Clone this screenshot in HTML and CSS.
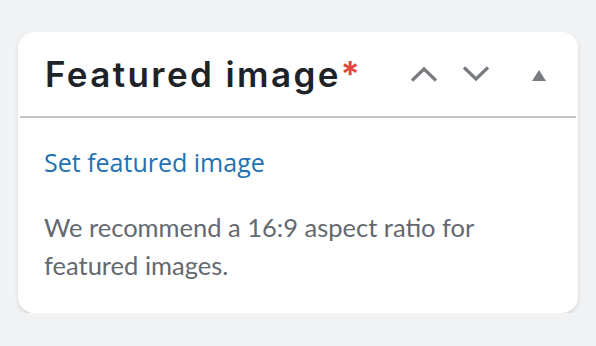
FILE: index.html
```html
<!DOCTYPE html>
<html lang="en">
<head>
<meta charset="UTF-8" />
<meta name="viewport" content="width=device-width, initial-scale=1" />
<title>Featured image</title>
<link rel="stylesheet" href="styles.css">
</head>
<body>
  <section class="panel">
    <header class="panel-head">
      <h2 class="panel-title">Featured image<span class="required">*</span></h2>
      <div class="panel-actions">
        <button class="icon-btn" aria-label="Move up">
          <svg width="28" height="16" viewBox="0 0 28 16"><path d="M2 14.5 L14 3 L26 14.5" fill="none" stroke="currentColor" stroke-width="3.2"/></svg>
        </button>
        <button class="icon-btn" aria-label="Move down">
          <svg width="28" height="16" viewBox="0 0 28 16"><path d="M2 1.5 L14 13 L26 1.5" fill="none" stroke="currentColor" stroke-width="3.2"/></svg>
        </button>
        <button class="icon-btn toggle" aria-label="Toggle panel">
          <svg width="14" height="11" viewBox="0 0 14 11"><path d="M7 0 L14 11 L0 11 Z" fill="currentColor"/></svg>
        </button>
      </div>
    </header>
    <div class="panel-body">
      <a href="#" class="set-link">Set featured image</a>
      <p class="hint">We recommend a 16:9 aspect ratio for featured images.</p>
    </div>
  </section>
</body>
</html>
```

FILE: styles.css
```css
* {
  box-sizing: border-box;
}
body {
  margin: 0;
  background: #f1f2f4;
  font-family: 'Lato', sans-serif;
  padding: 32px 18px 0;
}
/* Panel card */
.panel {
  width: 560px;
  background: #fff;
  border-radius: 16px;
  box-shadow: 0 2px 4px rgba(0, 0, 0, 0.12);
}
.panel-head {
  display: flex;
  align-items: center;
  justify-content: space-between;
  height: 86px;
  margin: 0 2px;
  padding: 0 30px 0 25px;
  border-bottom: 2px solid #c3c4c7;
}
.panel-title {
  margin: 0;
  font-family: 'Inter', sans-serif;
  font-weight: 600;
  font-size: 35px;
  letter-spacing: 2.4px;
  color: #1d2327;
}
.required {
  color: #e2473b;
  letter-spacing: 0;
}
.panel-actions {
  display: flex;
  align-items: center;
  gap: 24px;
}
.icon-btn {
  background: none;
  border: none;
  padding: 0;
  color: #787c82;
  display: flex;
  cursor: pointer;
}
.icon-btn.toggle {
  margin-left: 18px;
  margin-top: 2px;
}
.panel-body {
  padding: 27px 26px 29px;
}
.set-link {
  display: block;
  font-family: 'Open Sans', sans-serif;
  font-size: 25px;
  color: #2271b1;
  text-decoration: none;
}
.hint {
  margin: 29px 0 0;
  font-size: 25.5px;
  line-height: 38px;
  color: #646970;
}
```
